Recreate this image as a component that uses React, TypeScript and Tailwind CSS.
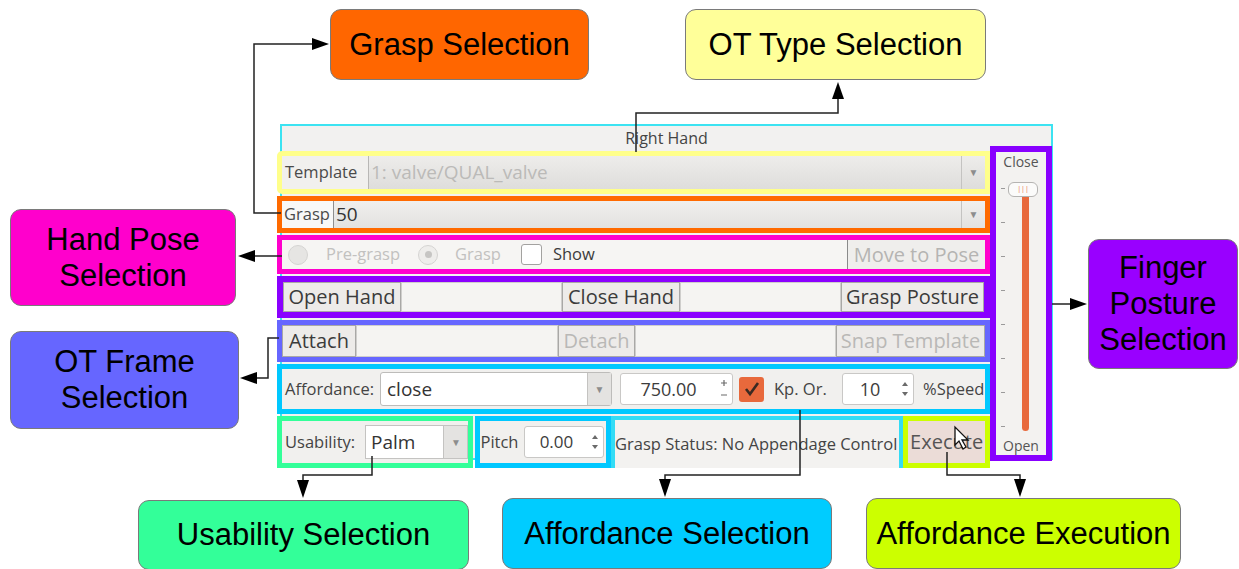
import React from "react";

const ui = "font-['Open_Sans',sans-serif]";

const Node = ({ className, children }: { className: string; children: React.ReactNode }) => (
  <div
    className={`absolute flex items-center justify-center text-center rounded-[11px] border border-[#7a7a7a] text-black text-[31px] leading-[36px] font-['Liberation_Sans',Arial,sans-serif] ${className}`}
  >
    {children}
  </div>
);

const DropArrow = ({ className = "" }: { className?: string }) => (
  <div className={`flex h-full w-[24px] items-center justify-center border-l border-[#c4c3c1] text-[10px] text-[#8d8d8d] ${className}`}>
    ▼
  </div>
);

const Spin = ({ value, w, plus, size = "text-[17px]" }: { value: string; w: string; plus?: boolean; size?: string }) => (
  <div className={`flex h-[32px] ${w} items-center rounded-[3px] border border-[#c9c8c6] bg-white`}>
    <span className={`flex-1 text-center ${size} text-[#3c3c3c]`}>{value}</span>
    <div className="flex h-full w-[16px] items-center justify-center">
      {plus ? (
        <svg width="10" height="22" viewBox="0 0 10 22">
          <path d="M2 5h6M5 2v6M2 17h6" stroke="#6a6a6a" strokeWidth="1.2" fill="none" />
        </svg>
      ) : (
        <svg width="8" height="20" viewBox="0 0 8 20">
          <path d="M1 7l3-4 3 4zM1 13l3 4 3-4z" fill="#6a6a6a" />
        </svg>
      )}
    </div>
  </div>
);

const Btn = ({ label, w, off }: { label: string; w: string; off?: boolean }) => (
  <div
    className={`flex h-full ${w} shrink-0 items-center justify-center border border-[#a9a8a6] bg-[#edebe9] text-[20px] ${off ? "text-[#b9b8b6]" : "text-[#3b3b3b]"}`}
  >
    {label}
  </div>
);

const Blank = ({ w }: { w: string }) => <div className={`h-full ${w} shrink-0 border border-[#cfcecc] bg-[#f5f4f2]`} />;

function Slider() {
  return (
    <div className="flex h-[315px] w-[62px] shrink-0 flex-col items-center border-[6px] border-[#8800ff] bg-[#f3f2f0] text-[14px] text-[#555]">
      <div className="mt-[1px] leading-[17px]">Close</div>
      <div className="relative flex w-full flex-1 pt-[14px] pb-[6px]">
        <div className="flex w-[16px] flex-col justify-between py-[4px] pl-[5px]">
          {Array.from({ length: 8 }).map((_, i) => (
            <div key={i} className="h-[1px] w-[4px] bg-[#9a9a9a]" />
          ))}
        </div>
        <div className="mx-auto mr-[17px] w-[7px] rounded-full bg-[#e8693c]" />
        <div className="absolute left-[12px] top-[12px] h-[15px] w-[30px] rounded-[6px] border border-[#b5b4b2] bg-[#fbfbfa] text-center text-[7px] leading-[12px] text-[#e8693c]">
          |||
        </div>
      </div>
      <div className="mb-[1px] leading-[17px]">Open</div>
    </div>
  );
}

function Panel() {
  return (
    <div className={`absolute left-[280px] top-[124px] h-[336px] w-[773px] border-2 border-[#3ce3f2] bg-[#f2f1f0] ${ui}`}>
      <div className="h-[20px] text-center text-[16px] leading-[24px] text-[#444]">Right Hand</div>
      <div className="flex">
        <div className="-ml-[5px] mt-[5px] flex w-[713px] shrink-0 flex-col gap-[2px]">
          {/* template */}
          <div className="flex h-[43px] items-center rounded-l-[5px] border-[5px] border-[#ffff8a] bg-[#f1f0ee]">
            <div className="w-[86px] pl-[3px] text-[16.5px] text-[#4a4a4a]">Template</div>
            <div className="flex h-full flex-1 items-center border-l border-[#b8b7b5] bg-gradient-to-b from-[#eeedeb] to-[#dedddb]">
              <span className="flex-1 pl-[2px] text-[19px] text-[#bbbab8]">1: valve/QUAL_valve</span>
              <DropArrow />
            </div>
          </div>
          {/* grasp */}
          <div className="flex h-[37px] items-center border-[5px] border-[#ff6a00] bg-[#eeedeb]">
            <div className="flex h-full w-[51px] items-center bg-[#f8f8f7] pl-[2px] text-[16.5px] text-[#4a4a4a]">Grasp</div>
            <div className="flex h-full flex-1 items-center border-l border-[#8e8e8e] bg-gradient-to-b from-[#f0efed] to-[#e3e2e0]">
              <span className="flex-1 pl-[2px] text-[19px] text-[#333]">50</span>
              <DropArrow />
            </div>
          </div>
          {/* hand pose */}
          <div className="flex h-[39px] items-center border-[5px] border-[#ff00cc] bg-[#f6f5f3] text-[16.5px]">
            <div className="ml-[6px] h-[20px] w-[20px] rounded-full border border-[#d5d4d2] bg-[#e6e5e3]" />
            <span className="ml-[18px] text-[#c2c1bf]">Pre-grasp</span>
            <div className="ml-[18px] flex h-[20px] w-[20px] items-center justify-center rounded-full border border-[#d5d4d2] bg-[#eeedeb]">
              <div className="h-[7px] w-[7px] rounded-full bg-[#c6c5c3]" />
            </div>
            <span className="ml-[17px] text-[#c2c1bf]">Grasp</span>
            <div className="ml-[20px] h-[21px] w-[21px] rounded-[3px] border border-[#a3a2a0] bg-white" />
            <span className="ml-[11px] text-[#3c3c3c]">Show</span>
            <div className="h-full flex-1 border-r border-[#8a8a8a]" />
            <div className="flex h-full w-[137px] items-center justify-center bg-[#efeeec] text-[20px] text-[#b5b4b2]">Move to Pose</div>
          </div>
          {/* fingers */}
          <div className="flex h-[42px] items-center border-[6px] border-[#8a00ff] bg-[#f3f2f0]">
            <Btn label="Open Hand" w="w-[118px]" />
            <Blank w="w-[161px]" />
            <Btn label="Close Hand" w="w-[118px]" />
            <Blank w="w-[161px]" />
            <Btn label="Grasp Posture" w="w-[143px]" />
          </div>
          {/* ot frame */}
          <div className="flex h-[42px] items-center border-[5px] border-[#6666ff] bg-[#f3f2f0]">
            <Btn label="Attach" w="w-[74px]" />
            <Blank w="w-[202px]" />
            <Btn label="Detach" w="w-[77px]" off />
            <Blank w="w-[201px]" />
            <Btn label="Snap Template" w="w-[149px]" off />
          </div>
          {/* affordance */}
          <div className="flex h-[50px] items-center border-[5px] border-[#00c8ff] bg-[#f1f0ee] text-[16.5px] text-[#444]">
            <span className="ml-[3px] w-[95px]">Affordance:</span>
            <div className="flex h-[34px] w-[232px] items-center rounded-[3px] border border-[#bdbcba] bg-white">
              <span className="flex-1 pl-[6px] text-[19px] text-[#333]">close</span>
              <DropArrow className="bg-[#e4e3e1]" />
            </div>
            <div className="ml-[8px]">
              <Spin value="750.00" w="w-[113px]" plus size="text-[18px]" />
            </div>
            <div className="ml-[6px] flex h-[25px] w-[25px] items-center justify-center rounded-[3px] bg-[#e8693c]">
              <svg width="18" height="18" viewBox="0 0 18 18">
                <path d="M3 9l4 5 8-11" fill="none" stroke="#3b2a22" strokeWidth="2.6" />
              </svg>
            </div>
            <span className="ml-[10px] w-[68px]">Kp. Or.</span>
            <Spin value="10" w="w-[72px]" size="text-[18px]" />
            <span className="ml-[9px]">%Speed</span>
          </div>
          {/* bottom */}
          <div className="flex h-[52px] text-[16.5px] text-[#444]">
            <div className="flex w-[197px] items-center border-[5px] border-[#33ff99] bg-[#f1f0ee]">
              <span className="ml-[3px] w-[80px]">Usability:</span>
              <div className="flex h-[34px] flex-1 items-center border border-[#c4c3c1] bg-white">
                <span className="flex-1 pl-[5px] text-[19px] text-[#333]">Palm</span>
                <DropArrow className="w-[18px] bg-[#e4e3e1]" />
              </div>
            </div>
            <div className="ml-[2px] flex w-[136px] items-center border-[5px] border-[#00c8ff] bg-[#f1f0ee]">
              <span className="w-[44px]">Pitch</span>
              <Spin value="0.00" w="w-[80px]" />
            </div>
            <div className="flex w-[293px] items-center border-[4px] border-b-0 border-[#33dcf5] bg-[#f3f2f0] whitespace-nowrap">
              Grasp Status: No Appendage Control
            </div>
            <div className="flex w-[87px] items-center border-[5px] border-[#ccff00] bg-[#f1f0ee]">
              <div className="flex h-full flex-1 items-center justify-center bg-[#ebdcd7] text-[20px] text-[#555]">Execute</div>
            </div>
          </div>
        </div>
        <Slider />
      </div>
    </div>
  );
}

function Connectors() {
  const s = "#222";
  return (
    <svg className="pointer-events-none absolute inset-0" width="1239" height="569" viewBox="0 0 1239 569">
      <g fill="none" stroke={s} strokeWidth="1.5">
        <polyline points="281,213 254,213 254,44 314,44" />
        <polyline points="636,152 636,113 838,113 838,98" />
        <polyline points="282,256 254,256" />
        <polyline points="279,338 268,338 268,378 256,378" />
        <polyline points="1052,304 1072,304" />
        <polyline points="372,456 372,475 303,475 303,482" />
        <polyline points="800,410 800,475 665,475 665,482" />
        <polyline points="947,452 947,475 1020,475 1020,482" />
      </g>
      <g fill="#000">
        <polygon points="329,44 312,38 312,50" />
        <polygon points="838,82 832,99 844,99" />
        <polygon points="238,256 255,250 255,262" />
        <polygon points="240,378 257,372 257,384" />
        <polygon points="1087,304 1070,298 1070,310" />
        <polygon points="303,498 297,480 309,480" />
        <polygon points="665,497 659,479 671,479" />
        <polygon points="1020,497 1014,479 1026,479" />
      </g>
      {/* mouse pointer over Execute */}
      <path d="M955 427 L955 445 L959 441 L963 449 L966 447 L962 440 L968 440 Z" fill="#fff" stroke="#111" strokeWidth="1.3" />
    </svg>
  );
}

export default function App() {
  return (
    <div className="relative h-[569px] w-[1239px] overflow-hidden bg-white">
      <Panel />
      <Node className="left-[330px] top-[9px] h-[71px] w-[259px] bg-[#ff6600]">Grasp Selection</Node>
      <Node className="left-[685px] top-[9px] h-[71px] w-[301px] bg-[#ffff99]">OT Type Selection</Node>
      <Node className="left-[10px] top-[209px] h-[97px] w-[226px] bg-[#ff00cc]">
        Hand Pose
        <br />
        Selection
      </Node>
      <Node className="left-[10px] top-[331px] h-[98px] w-[229px] bg-[#6666ff]">
        OT Frame
        <br />
        Selection
      </Node>
      <Node className="left-[1088px] top-[239px] h-[130px] w-[150px] bg-[#9900ff]">
        Finger
        <br />
        Posture
        <br />
        Selection
      </Node>
      <Node className="left-[138px] top-[500px] h-[70px] w-[331px] bg-[#33ff99]">Usability Selection</Node>
      <Node className="left-[502px] top-[498px] h-[71px] w-[330px] bg-[#00ccff]">Affordance Selection</Node>
      <Node className="left-[866px] top-[498px] h-[71px] w-[315px] bg-[#ccff00]">Affordance Execution</Node>
      <Connectors />
    </div>
  );
}
